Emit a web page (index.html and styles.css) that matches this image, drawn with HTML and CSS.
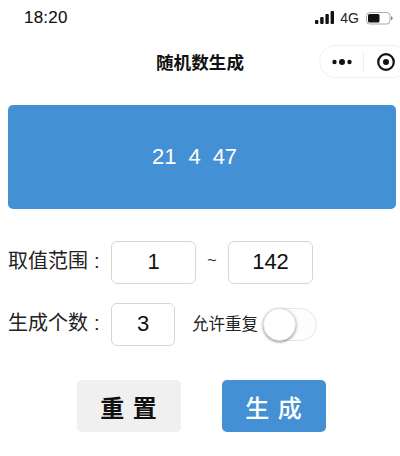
FILE: index.html
```html
<!DOCTYPE html>
<html lang="zh">
<head>
<meta charset="utf-8">
<title>随机数生成</title>
<link rel="stylesheet" href="styles.css">
</head>
<body>
<div class="status">
  <span class="time">18:20</span>
  <div class="status-right">
    <svg class="signal" width="20" height="13" viewBox="0 0 20 13"><rect x="0" y="9" width="3.4" height="4" rx="1"/><rect x="5.2" y="6" width="3.4" height="7" rx="1"/><rect x="10.4" y="3" width="3.4" height="10" rx="1"/><rect x="15.6" y="0" width="3.4" height="13" rx="1"/></svg>
    <span class="net">4G</span>
    <svg class="battery" width="27" height="14" viewBox="0 0 27 14"><rect x="0.5" y="1.5" width="23.5" height="11.5" rx="3.2" fill="none" stroke="#aaa"/><rect x="2" y="3" width="11.5" height="8.5" rx="1.6" fill="#111"/><path d="M25 5.2v4c1-.3 1.6-1.1 1.6-2s-.6-1.7-1.6-2z" fill="#888"/></svg>
  </div>
</div>
<div class="nav">
  <span class="title">随机数生成</span>
  <div class="capsule">
    <svg width="20" height="8" viewBox="0 0 20 8"><circle cx="2.5" cy="4" r="2.2"/><circle cx="10" cy="4" r="3"/><circle cx="17.5" cy="4" r="2.2"/></svg>
    <span class="capsule-sep"></span>
    <svg width="20" height="20" viewBox="0 0 20 20"><circle cx="10" cy="10" r="7.8" fill="none" stroke="#111" stroke-width="2.2"/><circle cx="10" cy="10" r="3"/></svg>
  </div>
</div>
<div class="result">
  <span>21</span><span>4</span><span>47</span>
</div>
<div class="row row-range">
  <span class="label">取值范围<span class="colon">:</span></span>
  <div class="field field-wide">1</div>
  <span class="tilde">~</span>
  <div class="field field-wide">142</div>
</div>
<div class="row row-count">
  <span class="label">生成个数<span class="colon">:</span></span>
  <div class="field field-small">3</div>
  <span class="repeat">允许重复</span>
  <div class="switch"><span class="knob"></span></div>
</div>
<div class="actions">
  <div class="btn btn-reset">重 置</div>
  <div class="btn btn-go">生 成</div>
</div>
</body>
</html>
```
FILE: styles.css
```css
* { box-sizing: border-box; }
html, body { margin: 0; padding: 0; }
body {
  width: 400px;
  height: 456px;
  overflow: hidden;
  background: #fff;
  color: #111;
  font-family: "Liberation Sans", "Noto Sans CJK SC", sans-serif;
}
.status {
  height: 37px;
  padding: 0 7px 2px 24px;
  display: flex;
  justify-content: space-between;
  align-items: center;
}
.time { font-size: 17px; letter-spacing: 0.2px; -webkit-text-stroke: 0.1px #111; }
.status-right { display: flex; align-items: center; }
.signal { margin-right: 5px; fill: #111; }
.net { font-size: 14px; color: #222; margin-right: 7px; }
.nav {
  height: 49px;
  position: relative;
  display: flex;
  align-items: center;
  justify-content: center;
}
.title { font-size: 17.6px; font-weight: 700; }
.capsule {
  position: absolute;
  left: 319px;
  top: 8px;
  width: 90px;
  height: 33px;
  border: 1px solid #f1f1f1;
  border-radius: 17px;
  display: flex;
  align-items: center;
  padding-left: 12px;
  fill: #111;
}
.capsule-sep { width: 1px; height: 20px; background: #eee; margin: 0 12px 0 11px; }
.result {
  margin: 19px 4px 0 8px;
  height: 104px;
  padding-right: 15px;
  background: #4490d4;
  border-radius: 5px;
  color: #fff;
  font-size: 22px;
  display: flex;
  align-items: center;
  justify-content: center;
  gap: 12px;
}
.row { display: flex; align-items: center; padding-left: 8px; height: 42px; }
.row-range { margin-top: 32px; }
.row-count { margin-top: 20px; }
.label { width: 103px; font-size: 20px; color: #222; padding-bottom: 6px; }
.colon { margin-left: 6px; }
.field {
  height: 43px;
  border: 1px solid #d6d6d6;
  border-radius: 6px;
  display: flex;
  align-items: center;
  justify-content: center;
  font-size: 22px;
}
.field-wide { width: 85px; }
.field-small { width: 64px; }
.tilde { width: 32px; text-align: center; font-size: 16px; color: #333; padding-bottom: 3px; }
.repeat { margin-left: 17px; font-size: 16.5px; color: #222; padding-bottom: 3px; }
.switch {
  position: relative;
  width: 54px;
  height: 33px;
  margin-left: 5px;
  border: 1px solid #e6e6e6;
  border-radius: 17px;
  background: #fdfdfd;
}
.knob {
  position: absolute;
  left: -1px;
  top: -1px;
  width: 33px;
  height: 33px;
  border-radius: 50%;
  background: #fff;
  border: 1px solid #e8e8e8;
  box-shadow: 0 1px 3px rgba(0, 0, 0, 0.45);
}
.actions {
  margin-top: 35px;
  padding-left: 77px;
  display: flex;
  gap: 41px;
}
.btn {
  width: 104px;
  height: 52px;
  border-radius: 5px;
  display: flex;
  align-items: center;
  justify-content: center;
  font-size: 24px;
  font-weight: 700;
  letter-spacing: 1px;
}
.btn-reset { background: #f0f0f0; color: #111; }
.btn-go { background: #4490d4; color: #fff; font-weight: 500; }
```
